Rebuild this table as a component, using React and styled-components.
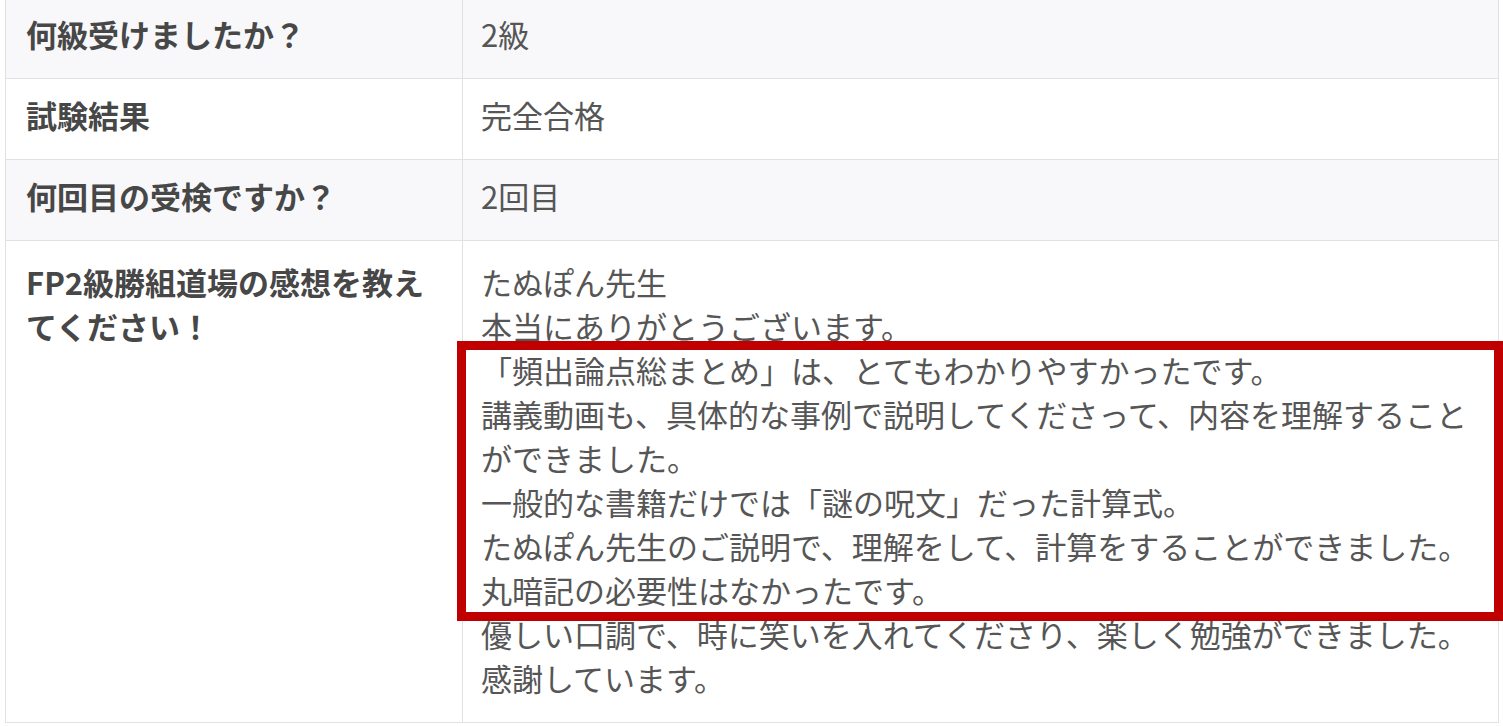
import React from 'react'
import styled, { createGlobalStyle } from 'styled-components'

const rows = [
    { label: '何級受けましたか？', value: ['2級'] },
    { label: '試験結果', value: ['完全合格'] },
    { label: '何回目の受検ですか？', value: ['2回目'] },
    {
        label: 'FP2級勝組道場の感想を教えてください！',
        value: [
            'たぬぽん先生',
            '本当にありがとうございます。',
            '「頻出論点総まとめ」は、とてもわかりやすかったです。',
            '講義動画も、具体的な事例で説明してくださって、内容を理解すること',
            'ができました。',
            '一般的な書籍だけでは「謎の呪文」だった計算式。',
            'たぬぽん先生のご説明で、理解をして、計算をすることができました。',
            '丸暗記の必要性はなかったです。',
            '優しい口調で、時に笑いを入れてくださり、楽しく勉強ができました。',
            '感謝しています。',
        ],
        highlight: true,
    },
]

function App() {
    return (
        <>
            <GlobalStyle />
            <Page>
                <Table>
                    <colgroup>
                        <col style={{ width: 457 }} />
                        <col />
                    </colgroup>
                    <tbody>
                        {rows.map((row, i) => {
                            const last = i === rows.length - 1
                            return (
                                <Row key={row.label} striped={i % 2 === 0}>
                                    <Label last={last}>{row.label}</Label>
                                    <Value last={last}>
                                        <Content>
                                            {row.value.map(line => (
                                                <Line key={line}>{line}</Line>
                                            ))}
                                            {row.highlight && <Highlight />}
                                        </Content>
                                    </Value>
                                </Row>
                            )
                        })}
                    </tbody>
                </Table>
            </Page>
        </>
    )
}

export default App


const GlobalStyle = createGlobalStyle`
    body {
        margin: 0;
        background: #ffffff;
        overflow: hidden;
        font-family: "Noto Sans CJK JP", "Noto Sans", sans-serif;
    }
`

const Page = styled.div`
    width: 1503px;
    height: 727px;
    padding-left: 5px;
    margin-top: -3px;
    box-sizing: border-box;
`

const Table = styled.table`
    width: 1494px;
    border-collapse: collapse;
    table-layout: fixed;
`

const Row = styled.tr`
    background: ${props => (props.striped ? '#f8f8fa' : '#ffffff')};
`

const Label = styled.th`
    border: 1px solid #e1e1e3;
    padding: ${props => (props.last ? '19px 19px 22px 20px' : '14px 19px 22px 20px')};
    text-align: left;
    vertical-align: top;
    font-size: 31px;
    line-height: 44px;
    font-weight: 700;
    color: #474747;
`

const Value = styled.td`
    border: 1px solid #e1e1e3;
    padding: ${props => (props.last ? '19px 18px 22px 18px' : '14px 18px 22px 18px')};
    vertical-align: top;
    font-size: 31px;
    line-height: 44px;
    font-weight: 400;
    color: #565656;
`

const Content = styled.div`
    position: relative;
`

const Line = styled.div`
    white-space: nowrap;
`

const Highlight = styled.div`
    position: absolute;
    left: -24px;
    top: 81px;
    width: 1046px;
    height: 280px;
    box-sizing: border-box;
    border: 9px solid #c00000;
    pointer-events: none;
`
